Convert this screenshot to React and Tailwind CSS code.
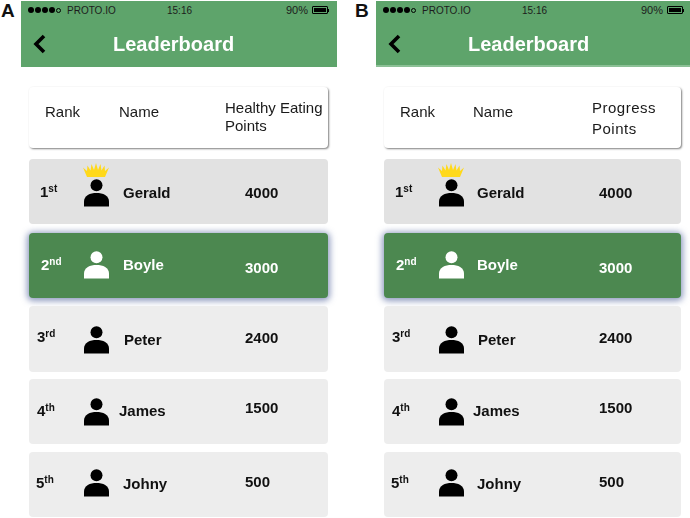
import React from "react";

const players = [
  {
    rank: "1", suffix: "st", name: "Gerald", points: "4000",
    box: "h-[65px] mb-[9px] bg-[#e2e2e2] text-[#111]",
    rankCls: "pl-[11px] mt-[1px]", iconCls: "mt-[3px]", nameCls: "pl-[14px] mt-[3px]", pointsCls: "mt-[3px]",
    crown: true,
  },
  {
    rank: "2", suffix: "nd", name: "Boyle", points: "3000",
    box: "h-[65px] mb-[8px] bg-[#4c8850] text-white shadow-[0_1px_6px_2px_rgba(70,90,150,0.6)]",
    rankCls: "pl-[12px] mb-[1px]", iconCls: "mb-[2px]", nameCls: "pl-[14px] mb-[1px]", pointsCls: "mt-[5px]",
    light: true,
  },
  {
    rank: "3", suffix: "rd", name: "Peter", points: "2400",
    box: "h-[66px] mb-[7px] bg-[#ededed] text-[#111]",
    rankCls: "pl-[8px] mb-[4px]", iconCls: "mt-[1px]", nameCls: "pl-[15px] mt-[2px]", pointsCls: "mb-[2px]",
  },
  {
    rank: "4", suffix: "th", name: "James", points: "1500",
    box: "h-[65px] mb-[8px] bg-[#ededed] text-[#111]",
    rankCls: "pl-[8px]", iconCls: "", nameCls: "pl-[10px]", pointsCls: "mb-[7px]",
  },
  {
    rank: "5", suffix: "th", name: "Johny", points: "500",
    box: "h-[65px] bg-[#ededed] text-[#111]",
    rankCls: "pl-[7px] mb-[3px]", iconCls: "mb-[3px]", nameCls: "pl-[14px]", pointsCls: "mb-[5px]",
  },
];

function Person({ light }) {
  return (
    <svg width="25" height="28" viewBox="0 0 25 28" fill={light ? "#fff" : "#000"}>
      <circle cx="12.5" cy="6.2" r="6" />
      <path d="M0 27.5V22.5C0 16.5 6 14 12.5 14S25 16.5 25 22.5V27.5Z" />
    </svg>
  );
}

function Crown() {
  return (
    <svg width="26" height="15" viewBox="0 0 26 15" fill="#ffd91a">
      <path d="M4 14L0 4.5 4 8 4.5 2.5 7.5 7.5 8.5 1 11 7 13 0 15 7 17.5 1 18.5 7.5 21.5 2.5 22 8 26 4.5 22 14Z" />
    </svg>
  );
}

function StatusBar() {
  return (
    <div className="flex items-center h-[17px] pt-[1px] text-[10px] text-[#1c1c1c]">
      <div className="w-[146px] flex items-center pl-[7px] shrink-0">
        <span className="flex items-center gap-[1px] mr-[6px]">
          <i className="block w-[6px] h-[6px] rounded-full bg-black" />
          <i className="block w-[6px] h-[6px] rounded-full bg-black" />
          <i className="block w-[6px] h-[6px] rounded-full bg-black" />
          <i className="block w-[6px] h-[6px] rounded-full bg-black" />
          <i className="block w-[5px] h-[5px] rounded-full border border-black" />
        </span>
        PROTO.IO
      </div>
      <div className="w-[119px] shrink-0">15:16</div>
      <div className="text-[11px]">90%</div>
      <div className="ml-[4px] flex items-center">
        <span className="block w-[16px] h-[8px] border border-black rounded-[1px] p-[1px]">
          <span className="block h-full bg-black" />
        </span>
        <span className="block w-[1px] h-[3px] bg-black" />
      </div>
    </div>
  );
}

function Row({ p, cols }) {
  return (
    <div className={`grid items-center rounded-[4px] text-[15px] font-bold ${cols} ${p.box}`}>
      <div className={p.rankCls}>
        {p.rank}
        <sup className="text-[10px]">{p.suffix}</sup>
      </div>
      <div className={`relative h-[28px] ${p.iconCls}`}>
        {p.crown && (
          <div className="absolute -top-[16px] -left-[1px] h-[15px]">
            <Crown />
          </div>
        )}
        <Person light={p.light} />
      </div>
      <div className={p.nameCls}>{p.name}</div>
      <div className={p.pointsCls}>{p.points}</div>
    </div>
  );
}

function Panel({ width, head, cols, line, pointsHead, soft }) {
  return (
    <div className={`${width} shrink-0 ${soft}`}>
      <div className={`h-[66px] bg-[#5ea46b] ${line ? "border-b-2 border-[#8cc096]" : ""}`}>
        <StatusBar />
        <div className="flex items-center h-[52px]">
          <svg className="ml-[11px] mb-[1px] shrink-0" width="15" height="20" viewBox="0 0 15 20" fill="none">
            <path d="M12 2L4 10L12 18" stroke="#000" strokeWidth="3.6" />
          </svg>
          <div className="ml-[66px] text-[20px] font-bold text-white">Leaderboard</div>
        </div>
      </div>
      <div className="pl-[8px] pr-[9px]">
        <div className={`mt-[20px] mb-[11px] h-[61px] bg-white rounded-[4px] shadow-[1px_1px_2px_rgba(0,0,0,0.5)] grid items-center text-[15px] text-[#1a1a1a] ${head}`}>
          <div className="pl-[16px] mb-[10px]">Rank</div>
          <div className="mb-[10px]">Name</div>
          {pointsHead}
        </div>
        {players.map((p) => (
          <Row key={p.rank} p={p} cols={cols} />
        ))}
      </div>
    </div>
  );
}

export default function App() {
  return (
    <div className="w-[690px] h-[518px] overflow-hidden bg-white flex pt-[1px] font-['Liberation_Sans',sans-serif]">
      <div className="w-[21px] shrink-0 pl-[1px] text-[19px] font-bold leading-[20px] text-[#111]">A</div>
      <Panel
        width="w-[316px]"
        soft="blur-[0.3px]"
        head="grid-cols-[90px_106px_1fr]"
        cols="grid-cols-[55px_25px_136px_1fr]"
        pointsHead={
          <div className="leading-[18px] mb-[1px] whitespace-nowrap">
            Healthy Eating
            <br />
            Points
          </div>
        }
      />
      <div className="w-[39px] shrink-0 pl-[18px] text-[19px] font-bold leading-[20px] text-[#111]">B</div>
      <Panel
        width="w-[314px]"
        line
        soft="blur-[0.6px]"
        head="grid-cols-[89px_119px_1fr]"
        cols="grid-cols-[55px_24px_136px_1fr]"
        pointsHead={
          <div className="leading-[21px] mt-[1px] tracking-[0.5px]">
            Progress
            <br />
            Points
          </div>
        }
      />
    </div>
  );
}
